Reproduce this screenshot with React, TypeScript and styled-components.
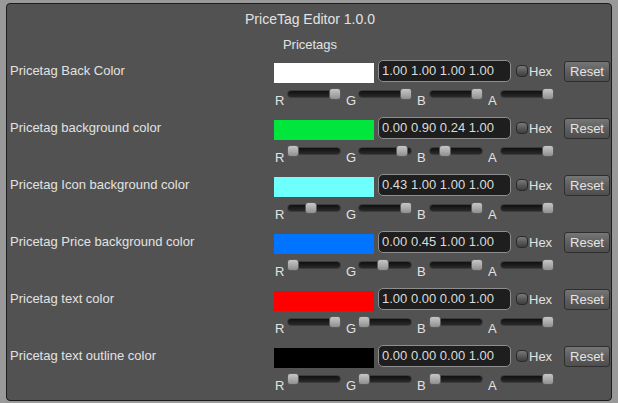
import React from 'react';
import styled, { createGlobalStyle } from 'styled-components';

type Rgba = [number, number, number, number];

type ColorSetting = {
  label: string;
  value: Rgba;
};

const SETTINGS: ColorSetting[] = [
  { label: 'Pricetag Back Color', value: [1, 1, 1, 1] },
  { label: 'Pricetag background color', value: [0, 0.9, 0.24, 1] },
  { label: 'Pricetag Icon background color', value: [0.43, 1, 1, 1] },
  { label: 'Pricetag Price background color', value: [0, 0.45, 1, 1] },
  { label: 'Pricetag text color', value: [1, 0, 0, 1] },
  { label: 'Pricetag text outline color', value: [0, 0, 0, 1] },
];

const CHANNELS = ['R', 'G', 'B', 'A'];

const toCss = ([r, g, b, a]: Rgba) =>
  `rgba(${Math.round(r * 255)}, ${Math.round(g * 255)}, ${Math.round(b * 255)}, ${a})`;

const GlobalStyle = createGlobalStyle`
  html, body {
    margin: 0;
    padding: 0;
    background: #999999;
    font-family: 'Liberation Sans', Arial, sans-serif;
  }
  #root {
    width: 618px;
    height: 403px;
    padding-top: 3px;
    box-sizing: border-box;
  }
`;

const Window = styled.div`
  box-sizing: border-box;
  margin: 0 6px;
  width: 606px;
  height: 398px;
  background: #525252;
  border: 1px solid #1c1c1c;
  border-radius: 4px;
  padding: 7px 1px 0 3px;
  color: #e2e2e2;
`;

const Title = styled.div`
  text-align: center;
  font-size: 14px;
  line-height: 16px;
`;

const Section = styled.div`
  text-align: center;
  font-size: 13px;
  line-height: 15px;
  margin-top: 10px;
  margin-bottom: 7px;
`;

const Row = styled.div`
  display: grid;
  grid-template-columns: 264px 1fr;
  height: 57px;
`;

const Label = styled.div`
  font-size: 13px;
  line-height: 23px;
`;

const Controls = styled.div`
  display: flex;
  flex-direction: column;
`;

const ControlLine = styled.div`
  display: flex;
  align-items: center;
  height: 24px;
`;

const Swatch = styled.div<{ $color: string }>`
  width: 100px;
  height: 20px;
  margin-top: 3px;
  background: ${(p) => p.$color};
`;

const ValueField = styled.div`
  box-sizing: border-box;
  margin-left: 4px;
  width: 133px;
  height: 22px;
  padding: 0 3px;
  background: #1e1e1e;
  border: 1px solid #8e8e8e;
  border-radius: 5px;
  font-size: 13px;
  line-height: 20px;
  color: #dcdcdc;
`;

const Check = styled.div`
  box-sizing: border-box;
  margin-left: 5px;
  width: 12px;
  height: 12px;
  border: 1px solid #2a2a2a;
  border-radius: 4px;
  background: linear-gradient(#7a7a7a, #5a5a5a 50%, #3e3e3e);
`;

const CheckLabel = styled.span`
  margin-left: 1px;
  font-size: 13px;
`;

const ResetButton = styled.div`
  box-sizing: border-box;
  margin-left: auto;
  width: 46px;
  height: 21px;
  border: 1px solid #2e2e2e;
  border-radius: 3px;
  background: linear-gradient(#767676, #5c5c5c 55%, #4e4e4e);
  font-size: 13px;
  line-height: 19px;
  text-align: center;
  color: #e4e4e4;
`;

const SliderLine = styled.div`
  display: flex;
  height: 22px;
  margin-top: 2px;
`;

const SliderGroup = styled.div`
  display: flex;
  align-items: flex-start;
  width: 71px;
`;

const ChannelLabel = styled.span`
  width: 12px;
  padding-left: 1px;
  padding-top: 9px;
  font-size: 13px;
  line-height: 13px;
`;

const Track = styled.div`
  position: relative;
  box-sizing: border-box;
  width: 54px;
  height: 8px;
  margin-top: 5px;
  background: linear-gradient(#101010, #2a2a2a);
  border: 1px solid #3c3c3c;
  border-radius: 4px;
`;

const Thumb = styled.div`
  position: absolute;
  top: -3px;
  box-sizing: border-box;
  width: 12px;
  height: 12px;
  border: 1px solid #5a5a5a;
  border-radius: 3px;
  background: linear-gradient(#c6c6c6, #a6a6a6 60%, #8e8e8e);
`;

const ColorRow = ({ setting }: { setting: ColorSetting }) => (
  <Row>
    <Label>{setting.label}</Label>
    <Controls>
      <ControlLine>
        <Swatch $color={toCss(setting.value)} />
        <ValueField>{setting.value.map((v) => v.toFixed(2)).join(' ')}</ValueField>
        <Check />
        <CheckLabel>Hex</CheckLabel>
        <ResetButton>Reset</ResetButton>
      </ControlLine>
      <SliderLine>
        {CHANNELS.map((ch, i) => (
          <SliderGroup key={ch}>
            <ChannelLabel>{ch}</ChannelLabel>
            <Track>
              <Thumb style={{ left: `${setting.value[i] * 42 - 1}px` }} />
            </Track>
          </SliderGroup>
        ))}
      </SliderLine>
    </Controls>
  </Row>
);

export default function App() {
  return (
    <>
      <GlobalStyle />
      <Window>
        <Title>PriceTag Editor 1.0.0</Title>
        <Section>Pricetags</Section>
        {SETTINGS.map((s) => (
          <ColorRow key={s.label} setting={s} />
        ))}
      </Window>
    </>
  );
}
